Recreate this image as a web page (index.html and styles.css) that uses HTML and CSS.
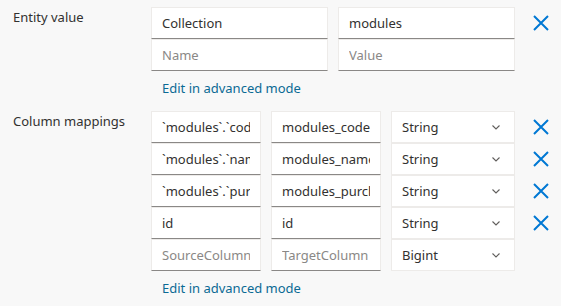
FILE: index.html
```html
<!DOCTYPE html>
<html lang="en">

<head>
    <meta charset="UTF-8" />
    <meta name="viewport" content="width=device-width, initial-scale=1.0" />
    <title>Entity mappings</title>
    <link rel="stylesheet" href="styles.css">
</head>

<body>
    <div class="form">
        <div class="field">
            <div class="field-label">Entity value</div>
            <div class="field-body">
                <div class="grid grid-pair">
                    <div class="stack">
                        <input class="text-input" value="Collection" />
                        <input class="text-input" placeholder="Name" />
                    </div>
                    <div class="stack">
                        <input class="text-input" value="modules" />
                        <input class="text-input" placeholder="Value" />
                    </div>
                    <button class="remove" title="Remove">
                        <svg viewBox="0 0 16 16" width="16" height="16"><path d="M1 1L15 15M15 1L1 15" /></svg>
                    </button>
                </div>
                <a class="edit-link" href="#">Edit in advanced mode</a>
            </div>
        </div>

        <div class="field">
            <div class="field-label">Column mappings</div>
            <div class="field-body">
                <div class="grid grid-map">
                    <input class="text-input" value="`modules`.`code`" />
                    <input class="text-input" value="modules_code" />
                    <div class="dropdown"><span>String</span><svg viewBox="0 0 8 5" width="8" height="5"><path d="M0.5 0.5L4 4L7.5 0.5" /></svg></div>
                    <button class="remove" title="Remove">
                        <svg viewBox="0 0 16 16" width="16" height="16"><path d="M1 1L15 15M15 1L1 15" /></svg>
                    </button>

                    <input class="text-input" value="`modules`.`name`" />
                    <input class="text-input" value="modules_name" />
                    <div class="dropdown"><span>String</span><svg viewBox="0 0 8 5" width="8" height="5"><path d="M0.5 0.5L4 4L7.5 0.5" /></svg></div>
                    <button class="remove" title="Remove">
                        <svg viewBox="0 0 16 16" width="16" height="16"><path d="M1 1L15 15M15 1L1 15" /></svg>
                    </button>

                    <input class="text-input" value="`modules`.`purchase_price`" />
                    <input class="text-input" value="modules_purchase_price" />
                    <div class="dropdown"><span>String</span><svg viewBox="0 0 8 5" width="8" height="5"><path d="M0.5 0.5L4 4L7.5 0.5" /></svg></div>
                    <button class="remove" title="Remove">
                        <svg viewBox="0 0 16 16" width="16" height="16"><path d="M1 1L15 15M15 1L1 15" /></svg>
                    </button>

                    <input class="text-input" value="id" />
                    <input class="text-input" value="id" />
                    <div class="dropdown"><span>String</span><svg viewBox="0 0 8 5" width="8" height="5"><path d="M0.5 0.5L4 4L7.5 0.5" /></svg></div>
                    <button class="remove" title="Remove">
                        <svg viewBox="0 0 16 16" width="16" height="16"><path d="M1 1L15 15M15 1L1 15" /></svg>
                    </button>

                    <input class="text-input" placeholder="SourceColumn" />
                    <input class="text-input" placeholder="TargetColumn" />
                    <div class="dropdown"><span>Bigint</span><svg viewBox="0 0 8 5" width="8" height="5"><path d="M0.5 0.5L4 4L7.5 0.5" /></svg></div>
                    <div></div>
                </div>
                <a class="edit-link" href="#">Edit in advanced mode</a>
            </div>
        </div>
    </div>
</body>

</html>
```

FILE: styles.css
```css
* {
    margin: 0;
    padding: 0;
    box-sizing: border-box;
}

body {
    font-family: 'Noto Sans', sans-serif;
    font-size: 13px;
    color: #323130;
    background: #f8f8f8;
}

.form {
    padding: 7px 0 0 13px;
    display: flex;
    flex-direction: column;
    gap: 13px;
}

.field {
    display: flex;
}

.field-label {
    width: 138px;
    line-height: 20px;
}

.field-body {
    display: flex;
    flex-direction: column;
    align-items: flex-start;
}

.grid {
    display: grid;
    column-gap: 10px;
}

.grid-pair {
    grid-template-columns: 177px 177px 32px;
    align-items: start;
}

.grid-map {
    grid-template-columns: 110px 110px 124px 32px;
    grid-auto-rows: 32px;
}

.stack {
    display: flex;
    flex-direction: column;
}

.text-input {
    width: 100%;
    height: 32px;
    font: inherit;
    color: #323130;
    background: #fff;
    border: 1px solid #edebe9;
    border-bottom-color: #8a8886;
    padding: 0 10px;
    outline: none;
}

.text-input::placeholder {
    color: #8a8886;
}

.dropdown {
    height: 32px;
    background: #fff;
    border: 1px solid #edebe9;
    display: flex;
    align-items: center;
    justify-content: space-between;
    padding: 0 14px 0 10px;
}

.dropdown svg {
    fill: none;
    stroke: #605e5c;
    stroke-width: 1.1;
}

.remove {
    height: 32px;
    border: none;
    background: none;
    display: flex;
    align-items: center;
    justify-content: center;
    cursor: pointer;
}

.remove svg {
    fill: none;
    stroke: #0078d4;
    stroke-width: 2;
}

.edit-link {
    color: #0b6a94;
    text-decoration: none;
    line-height: 20px;
    margin: 7px 0 0 11px;
}
```
